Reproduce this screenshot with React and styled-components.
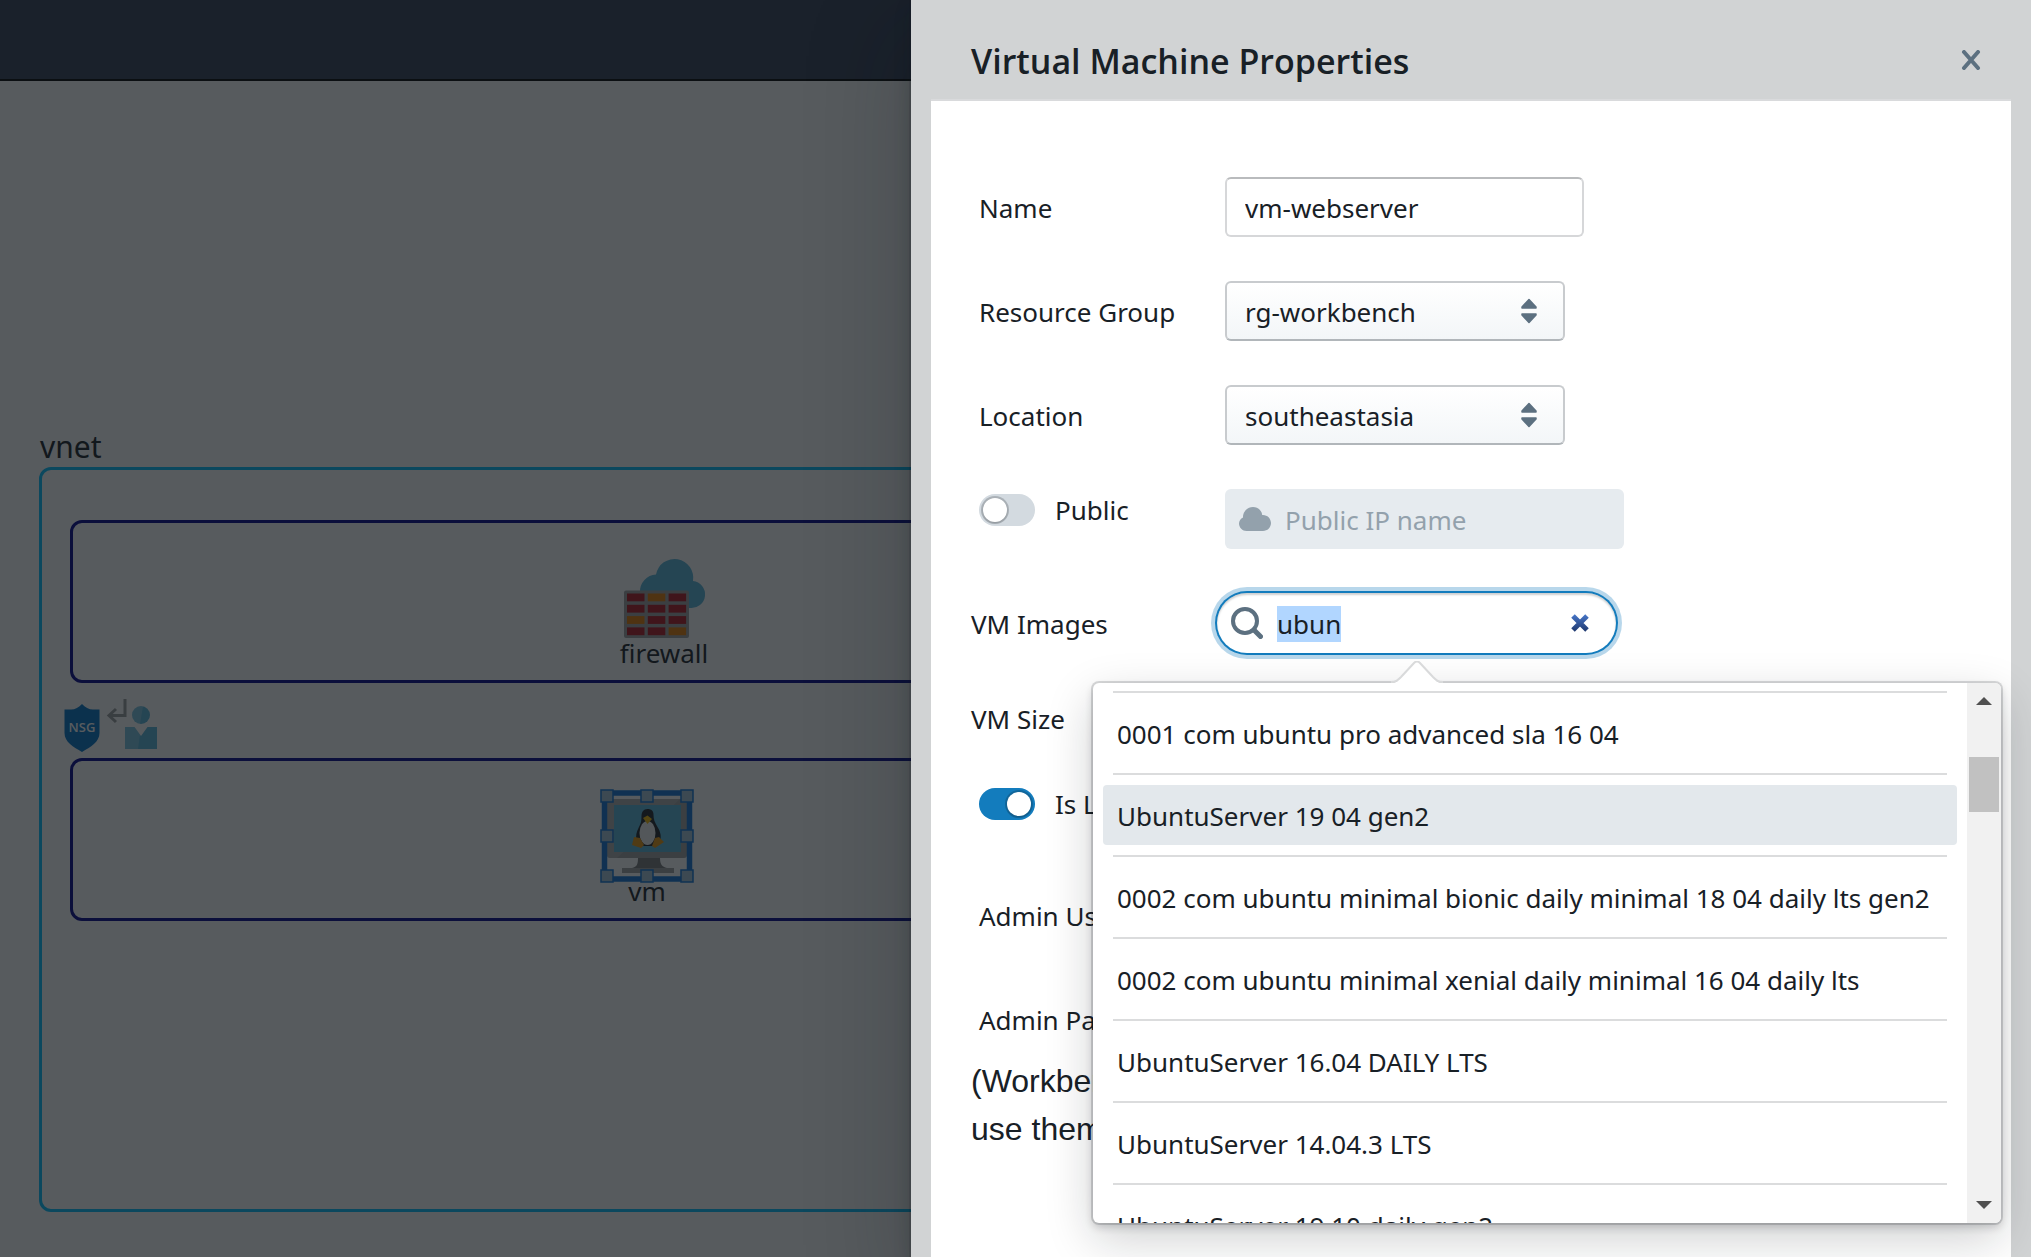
import React, { useEffect, useRef } from "react";
import styled, { createGlobalStyle } from "styled-components";

const UI_FONT = '"Noto Sans", "Open Sans", sans-serif';
const TITLE_FONT = '"Open Sans", "Noto Sans", sans-serif';

const GlobalStyle = createGlobalStyle`
  *, *::before, *::after { box-sizing: border-box; }
  html, body, #root { height: 100%; }
  body {
    margin: 0;
    overflow: hidden;
    color: #182026;
    font-family: ${UI_FONT};
    font-size: 26px;
    line-height: 36px;
  }
  button, input, select { font: inherit; color: inherit; }
`;

const Page = styled.div`
  position: relative;
  display: flex;
  flex-direction: column;
  height: 100vh;
  overflow: hidden;
`;

const TopBar = styled.header`
  flex: none;
  height: 81px;
  background: #333f54;
  border-bottom: 2px solid #000;
`;

/* ---------- diagram ---------- */

const Canvas = styled.main`
  position: relative;
  flex: 1;
  background: #fff;
`;

const Frame = styled.section`
  position: absolute;
  left: ${(p) => p.$x}px;
  right: ${(p) => p.$right}px;
  top: ${(p) => p.$y}px;
  height: ${(p) => p.$h}px;
  border: 3px solid ${(p) => p.$color};
  border-radius: 12px;
`;

const FrameTitle = styled.h2`
  position: absolute;
  left: 40px;
  top: 344px;
  margin: 0;
  font-size: 30px;
  font-weight: 400;
  line-height: 44px;
`;

const Node = styled.figure`
  position: absolute;
  left: ${(p) => p.$x}px;
  top: ${(p) => p.$y}px;
  display: flex;
  flex-direction: column;
  align-items: center;
  width: ${(p) => p.$w}px;
  margin: 0;

  svg { display: block; overflow: visible; }
`;

const NodeLabel = styled.figcaption`
  line-height: 30px;
`;

const Scrim = styled.div`
  position: absolute;
  inset: 0;
  background: rgba(16, 22, 26, 0.7);
`;

/* ---------- drawer ---------- */

const Drawer = styled.aside`
  position: absolute;
  top: 0;
  right: 0;
  bottom: 0;
  display: flex;
  flex-direction: column;
  width: 1120px;
  padding: 0 20px;
  background: #d1d3d4;
  box-shadow: 0 0 0 2px rgba(16, 22, 26, 0.1), 0 8px 16px rgba(16, 22, 26, 0.2),
    0 36px 92px 12px rgba(16, 22, 26, 0.2);
`;

const DrawerHeader = styled.header`
  display: flex;
  flex: none;
  align-items: center;
  justify-content: space-between;
  height: 101px;
  padding: 20px 20px 0 40px;
  border-bottom: 2px solid #d9dadc;
`;

const DrawerTitle = styled.h1`
  margin: 0;
  padding-top: 2px;
  font-family: ${TITLE_FONT};
  font-size: 34px;
  font-weight: 600;
  line-height: 48px;
`;

const IconButton = styled.button`
  display: grid;
  flex: none;
  place-items: center;
  width: 40px;
  height: 40px;
  padding: 0;
  border: 0;
  background: none;
  cursor: pointer;

  svg { display: block; }
`;

const Form = styled.form`
  display: flex;
  flex: 1;
  flex-direction: column;
  gap: 44px;
  min-height: 0;
  padding: 76px 14px 0 40px;
  overflow: visible;
  background: #fff;
`;

const Row = styled.div`
  display: flex;
  flex: none;
  align-items: ${(p) => (p.$top ? "flex-start" : "center")};
  min-height: ${(p) => p.$h || 60}px;
  padding-left: ${(p) => (p.$inset ? 8 : 0)}px;
`;

const Label = styled.label`
  flex: none;
  width: 246px;
  padding-top: 2px;
`;

const TextInput = styled.input`
  width: 359px;
  height: 60px;
  padding: 2px 18px 0;
  border: 2px solid #d6d7d9;
  border-top-color: #b9bbbd;
  border-radius: 6px;
  outline: 0;
  background: #fff;
`;

const SelectBox = styled.div`
  display: grid;
  align-items: center;
  width: 340px;

  > * { grid-area: 1 / 1; }
  svg { justify-self: end; margin-right: 28px; pointer-events: none; }
`;

const Select = styled.select`
  width: 100%;
  height: 60px;
  padding: 2px 60px 0 18px;
  appearance: none;
  border: 2px solid #c8cbce;
  border-bottom-color: #b1b6ba;
  border-radius: 6px;
  background: linear-gradient(#fff, #f3f6f8);
`;

const SwitchLabel = styled.label`
  display: flex;
  flex: none;
  align-items: center;
  gap: 20px;
  width: 246px;
  margin-top: 5px;
  line-height: 32px;
  white-space: nowrap;
`;

const Switch = styled.input`
  display: grid;
  flex: none;
  align-items: center;
  width: 56px;
  height: 32px;
  margin: 0;
  padding: 0 4px;
  appearance: none;
  border-radius: 16px;
  background: #d3dae0;

  &::before {
    content: "";
    width: 24px;
    height: 24px;
    border-radius: 50%;
    background: #fff;
    box-shadow: 0 0 0 2px rgba(16, 22, 26, 0.2), 0 1px 2px rgba(16, 22, 26, 0.2);
  }

  &:checked { background: #137cbd; }
  &:checked::before { justify-self: end; }
`;

const InputGroup = styled.div`
  display: flex;
  align-items: center;
  gap: 14px;
  width: 399px;
  height: 60px;
  padding: 0 16px 0 14px;
  border-radius: ${(p) => (p.$round ? 30 : 6)}px;
  background: ${(p) => (p.$disabled ? "#e6ebef" : "#fff")};
  box-shadow: ${(p) =>
    p.$round
      ? "0 0 0 2px #137cbd, 0 0 0 6px rgba(19, 124, 189, 0.3), inset 0 2px 2px rgba(16, 22, 26, 0.2)"
      : "none"};

  svg { flex: none; display: block; }
`;

const GroupInput = styled.input`
  flex: 1;
  min-width: 0;
  height: 56px;
  padding: 2px 0 0;
  border: 0;
  outline: 0;
  background: transparent;

  &::placeholder { color: #93a1ac; opacity: 1; }
  &::selection { background: #b1d6ff; color: #182026; }
`;

const SearchCell = styled.div`
  position: relative;
`;

const Note = styled.p`
  flex: none;
  margin: -36px 0 0;
  font-family: "Liberation Sans", Arial, sans-serif;
  font-size: 32px;
  line-height: 48px;
`;

/* ---------- suggestion popover ---------- */

const Popover = styled.div`
  position: absolute;
  z-index: 1;
  top: 90px;
  left: -124px;
  display: flex;
  width: 908px;
  height: 540px;
  border-radius: 6px;
  background: #fff;
  box-shadow: 0 0 0 2px rgba(16, 22, 26, 0.15), 0 4px 8px rgba(16, 22, 26, 0.2),
    0 16px 48px rgba(16, 22, 26, 0.2);
`;

const Arrow = styled.svg`
  position: absolute;
  top: -22px;
  left: 298px;
  display: block;
`;

const Menu = styled.ul`
  flex: 1;
  min-width: 0;
  margin: 0;
  padding: 8px 10px 0;
  overflow: hidden;
  list-style: none;
`;

const MenuItem = styled.li`
  padding-bottom: 10px;

  &::before {
    content: "";
    display: block;
    height: 2px;
    margin: 0 10px 10px;
    background: #dbdcdd;
  }
`;

const MenuButton = styled.button`
  display: block;
  width: 100%;
  height: 60px;
  padding: 2px 14px 0;
  border: 0;
  border-radius: 4px;
  background: ${(p) => (p.$active ? "#e3e8ec" : "transparent")};
  text-align: left;
  white-space: nowrap;
`;

const ScrollTrack = styled.div`
  display: flex;
  flex: none;
  flex-direction: column;
  align-items: center;
  width: 34px;
  padding: 14px 0;
  border-radius: 0 6px 6px 0;
  background: #f1f1f1;

  svg { display: block; }
`;

const ScrollThumb = styled.div`
  width: 30px;
  height: 55px;
  margin: 52px 0 auto;
  background: #c1c1c1;
`;

/* ---------- icons ---------- */

const FirewallIcon = () => {
  const orange = ["1-0", "0-2", "2-3"];
  return (
    <svg width="80" height="80" viewBox="0 0 80 80">
      <path
        d="M66 50a13.500 13.500 0 0 0 3-27A18.500 18.500 0 0 0 32 16.500A17 17 0 0 0 16 34v16z"
        fill="#59b4d9"
      />
      <rect y="32.500" width="65" height="47.500" rx="2" fill="#a0a1a2" />
      {[0, 1, 2, 3].map((r) =>
        [0, 1, 2].map((c) => (
          <rect
            key={`${c}-${r}`}
            x={3 + c * 20.800}
            y={35.500 + r * 11.300}
            width="17.500"
            height="7.800"
            fill={orange.includes(`${c}-${r}`) ? "#e57b00" : "#b2141f"}
          />
        ))
      )}
    </svg>
  );
};

const VmIcon = () => (
  <svg width="80" height="80" viewBox="0 0 80 80">
    <rect y="3" width="80" height="59" rx="3" fill="#a0a1a2" />
    <path d="M3 3h70L10 62H3a3 3 0 0 1-3-3V6a3 3 0 0 1 3-3z" fill="#fff" opacity="0.15" />
    <rect x="7" y="9" width="67" height="47" fill="#59b4d9" />
    <path d="M31 62h22c0 6 2 9 7 10H25c5-1 6-4 6-10z" fill="#7a7a7a" />
    <rect x="15" y="72" width="52" height="5" fill="#a0a1a2" />
    <path
      d="M40.500 13c-4 0-6 3-6 7 0 6-1 8-3 12s-3 8-2 12l5 6h13l6-7c1-4-1-9-3-12-3-5-4-8-4-12 0-4-2-6-6-6z"
      fill="#1f2428"
    />
    <ellipse cx="40.500" cy="37" rx="8" ry="12" fill="#f2f2f2" />
    <path d="M36 22l4.500-2.500L45 23l-4.500 5z" fill="#f0b400" />
    <path d="M27 41l6 1 4 7-3 3-9-3z M48 42l4-1 5 5-9 6-3-2z" fill="#e8930c" />
    <g>
      <rect x="-2.500" y="-3" width="85" height="86" fill="none" stroke="#1174d6" strokeWidth="5.500" />
      {[0, 40, 80].map((y) =>
        [0, 40, 80].map((x) =>
          x === 40 && y === 40 ? null : (
            <rect
              key={`${x}-${y}`}
              x={x - 6}
              y={y - 6}
              width="12"
              height="12"
              fill="#a5c4d8"
              stroke="#1174d6"
              strokeWidth="1.500"
            />
          )
        )
      )}
    </g>
  </svg>
);

const NsgLabel = styled.text`
  font-family: ${TITLE_FONT};
  font-size: 13px;
  font-weight: 600;
`;

const NsgIcon = () => (
  <svg width="36" height="48" viewBox="0 0 36 48">
    <path
      d="M18 0c3 3.500 7 5.500 11 5.500h6.500V29c0 9-9 14-17.500 19C9.500 43 .5 38 .5 29V5.500H7c4 0 8-2 11-5.500z"
      fill="#0072c6"
    />
    <NsgLabel x="18" y="28" textAnchor="middle" fill="#fff">
      NSG
    </NsgLabel>
  </svg>
);

const UserIcon = () => (
  <svg width="50" height="50" viewBox="0 0 50 50">
    <path d="M18 0v16.500H2M9 10L2 16.500 9 23" fill="none" stroke="#9c9d9e" strokeWidth="3" />
    <circle cx="34" cy="16" r="9" fill="#59b4d9" />
    <path d="M36 7.200a9 9 0 1 0-3 17.700z" fill="#fff" opacity="0.2" />
    <path d="M18 28h9.500l6.500 9 6.500-9H50v22H18z" fill="#59b4d9" />
    <path d="M18 28h9.500l5.500 7.500L31 50H18z" fill="#fff" opacity="0.2" />
  </svg>
);

const CrossIcon = ({ color = "#5c7080", cap = "round" }) => (
  <svg width="20" height="20" viewBox="0 0 20 20" aria-hidden="true">
    <defs>
      <linearGradient id="cross-blue" gradientUnits="userSpaceOnUse" x1="0" y1="0" x2="0" y2="20">
        <stop offset="0" stopColor="#4a7bd0" />
        <stop offset="1" stopColor="#1b3366" />
      </linearGradient>
    </defs>
    <path
      d={cap === "round" ? "M3 2L17 18M17 2L3 18" : "M3 3L17 17M17 3L3 17"}
      stroke={color}
      strokeWidth={cap === "round" ? 4 : 5}
      strokeLinecap={cap}
    />
  </svg>
);

const CaretsIcon = () => (
  <svg width="16" height="28" viewBox="0 0 16 28" aria-hidden="true">
    <path
      d="M8 2.500L15 10V11H1V10zM8 25.500L15 18V17H1V18z"
      fill="#5c7080"
      stroke="#5c7080"
      strokeWidth="1.500"
      strokeLinejoin="round"
    />
  </svg>
);

const CloudIcon = () => (
  <svg width="32" height="24" viewBox="0 0 32 24" aria-hidden="true">
    <path
      d="M24 8c-.3 0-.5 0-.8.1C22.900 3.500 18.900 0 14 0 8.500 0 4 4.500 4 10c0 .1 0 .3 0 .4C1.600 11.600 0 14 0 16.500 0 20.500 3.500 24 7.500 24H24c4.400 0 8-3.600 8-8s-3.600-8-8-8z"
      fill="#93a1ac"
    />
  </svg>
);

const SearchIcon = () => (
  <svg width="32" height="32" viewBox="0 0 32 32" aria-hidden="true">
    <circle cx="14" cy="14" r="12" fill="none" stroke="#5c7080" strokeWidth="4" />
    <path d="M23 23l6.500 6.500" stroke="#5c7080" strokeWidth="5" strokeLinecap="round" />
  </svg>
);

const TriangleIcon = ({ down }) => (
  <svg width="16" height="8" viewBox="0 0 16 8" aria-hidden="true">
    <path d={down ? "M0 0h16L8 8z" : "M8 0l8 8H0z"} fill="#505050" />
  </svg>
);

const images = [
  "0001 com ubuntu pro advanced sla 16 04",
  "UbuntuServer 19 04 gen2",
  "0002 com ubuntu minimal bionic daily minimal 18 04 daily lts gen2",
  "0002 com ubuntu minimal xenial daily minimal 16 04 daily lts",
  "UbuntuServer 16.04 DAILY LTS",
  "UbuntuServer 14.04.3 LTS",
  "UbuntuServer 19 10 daily gen2",
];

function ImageSearch() {
  const ref = useRef(null);
  useEffect(() => {
    ref.current.focus();
    ref.current.select();
  }, []);

  return (
    <SearchCell>
      <InputGroup $round>
        <SearchIcon />
        <GroupInput id="vm-images" ref={ref} defaultValue="ubun" autoComplete="off" />
        <IconButton type="button" aria-label="Clear search">
          <CrossIcon color="url(#cross-blue)" cap="butt" />
        </IconButton>
      </InputGroup>
      <Popover>
        <Arrow width="52" height="24" viewBox="0 0 52 24" aria-hidden="true">
          <path d="M0 22c5 0 7-2 10-5L23 3c2-2.500 4-2.500 6 0l13 14c3 3 5 5 10 5v2H0z" fill="#fff" />
          <path
            d="M0 21c5 0 7-2 10-5L23 2c2-2 4-2 6 0l13 14c3 3 5 5 10 5"
            fill="none"
            stroke="#d9dadb"
            strokeWidth="2"
          />
        </Arrow>
        <Menu>
          {images.map((name, i) => (
            <MenuItem key={name}>
              <MenuButton type="button" $active={i === 1}>
                {name}
              </MenuButton>
            </MenuItem>
          ))}
        </Menu>
        <ScrollTrack>
          <TriangleIcon />
          <ScrollThumb />
          <TriangleIcon down />
        </ScrollTrack>
      </Popover>
    </SearchCell>
  );
}

export default function App() {
  return (
    <Page>
      <GlobalStyle />
      <TopBar />
      <Canvas>
        <FrameTitle>vnet</FrameTitle>
        <Frame $x={39} $right={40} $y={386} $h={745} $color="#00bfff" />
        <Frame $x={70} $right={70} $y={439} $h={163} $color="#00008b" />
        <Frame $x={70} $right={70} $y={677} $h={163} $color="#00008b" />
        <Node $x={614} $y={477} $w={100}>
          <FirewallIcon />
          <NodeLabel>firewall</NodeLabel>
        </Node>
        <Node $x={64} $y={623} $w={36}>
          <NsgIcon />
        </Node>
        <Node $x={107} $y={618} $w={50}>
          <UserIcon />
        </Node>
        <Node $x={597} $y={715} $w={100}>
          <VmIcon />
          <NodeLabel>vm</NodeLabel>
        </Node>
      </Canvas>
      <Scrim />

      <Drawer>
        <DrawerHeader>
          <DrawerTitle>Virtual Machine Properties</DrawerTitle>
          <IconButton type="button" aria-label="Close">
            <CrossIcon />
          </IconButton>
        </DrawerHeader>
        <Form>
          <Row $inset>
            <Label htmlFor="vm-name">Name</Label>
            <TextInput id="vm-name" defaultValue="vm-webserver" />
          </Row>
          <Row $inset>
            <Label htmlFor="vm-group">Resource Group</Label>
            <SelectBox>
              <Select id="vm-group">
                <option>rg-workbench</option>
              </Select>
              <CaretsIcon />
            </SelectBox>
          </Row>
          <Row $inset>
            <Label htmlFor="vm-location">Location</Label>
            <SelectBox>
              <Select id="vm-location">
                <option>southeastasia</option>
              </Select>
              <CaretsIcon />
            </SelectBox>
          </Row>
          <Row $inset $top>
            <SwitchLabel>
              <Switch type="checkbox" role="switch" />
              Public
            </SwitchLabel>
            <InputGroup $disabled>
              <CloudIcon />
              <GroupInput aria-label="Public IP name" placeholder="Public IP name" disabled />
            </InputGroup>
          </Row>
          <Row>
            <Label htmlFor="vm-images">VM Images</Label>
            <ImageSearch />
          </Row>
          <Row $h={42}>
            <Label as="span">VM Size</Label>
          </Row>
          <Row $inset $top $h={58}>
            <SwitchLabel>
              <Switch type="checkbox" role="switch" defaultChecked />
              Is Linux
            </SwitchLabel>
          </Row>
          <Row $inset>
            <Label as="span">Admin Username</Label>
          </Row>
          <Row $inset>
            <Label as="span">Admin Password</Label>
          </Row>
          <Note>
            (Workbench
            <br />
            use them
          </Note>
        </Form>
      </Drawer>
    </Page>
  );
}
